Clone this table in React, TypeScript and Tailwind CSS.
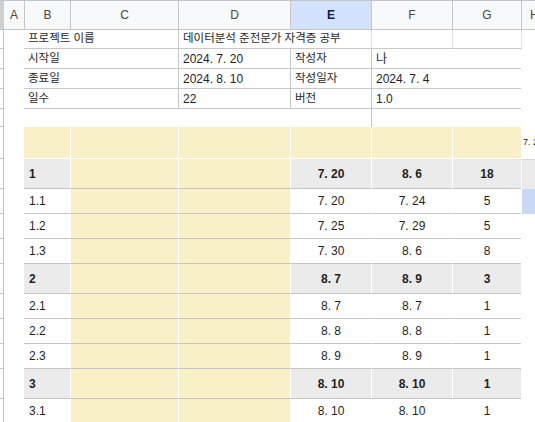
import React from 'react'

type Task = { id: string; start: string; end: string; days: string; group?: boolean }

const tasks: Task[] = [
  { id: '1', start: '7. 20', end: '8. 6', days: '18', group: true },
  { id: '1.1', start: '7. 20', end: '7. 24', days: '5' },
  { id: '1.2', start: '7. 25', end: '7. 29', days: '5' },
  { id: '1.3', start: '7. 30', end: '8. 6', days: '8' },
  { id: '2', start: '8. 7', end: '8. 9', days: '3', group: true },
  { id: '2.1', start: '8. 7', end: '8. 7', days: '1' },
  { id: '2.2', start: '8. 8', end: '8. 8', days: '1' },
  { id: '2.3', start: '8. 9', end: '8. 9', days: '1' },
  { id: '3', start: '8. 10', end: '8. 10', days: '1', group: true },
  { id: '3.1', start: '8. 10', end: '8. 10', days: '1' },
]

const info = [
  { label: '시작일', value: '2024. 7. 20', label2: '작성자', value2: '나' },
  { label: '종료일', value: '2024. 8. 10', label2: '작성일자', value2: '2024. 7. 4' },
  { label: '일수', value: '22', label2: '버전', value2: '1.0' },
]

function Gutter() {
  return <div className="w-[4px] shrink-0 border-r border-b border-[#c4c4c4]" />
}

function HeaderCell({ label, width, active }: { label: string; width: string; active?: boolean }) {
  return (
    <div
      className={`flex ${width} shrink-0 items-center justify-center border-l border-[#c4c7c5] ${
        active ? 'bg-[#d3e3fd] font-bold text-[#041e49]' : ''
      }`}
    >
      {label}
    </div>
  )
}

function TaskRow({ task, index }: { task: Task; index: number }) {
  const cell = task.group ? 'bg-[#ebebeb] font-bold' : 'bg-white'
  // column H: grey band next to the first group, selected cell under it
  const extra = index === 0 ? 'bg-[#ebebeb] border-t border-[#d6d6d6]' : index === 1 ? 'bg-[#c9d9f3]' : ''
  return (
    <div className={`flex ${task.group ? 'h-[30px]' : 'h-[25px]'}`}>
      <Gutter />
      <div className="w-[20px] shrink-0" />
      <div className={`flex w-[46px] shrink-0 items-center border-b border-[#c4c4c4] pl-[5px] ${cell}`}>
        {task.id}
      </div>
      <div className="w-[108px] shrink-0 border-b border-l border-b-[#c4c4c4] border-l-white bg-[#f9f0c8]" />
      <div className="w-[112px] shrink-0 border-b border-l border-b-[#c4c4c4] border-l-white bg-[#f9f0c8]" />
      <div className={`flex w-[81px] shrink-0 items-center justify-center border-b border-l border-b-[#c4c4c4] border-l-white ${cell}`}>
        {task.start}
      </div>
      <div className={`flex w-[81px] shrink-0 items-center justify-center border-b border-l border-b-[#c4c4c4] border-l-white ${cell}`}>
        {task.end}
      </div>
      <div className={`flex w-[69px] shrink-0 items-center justify-center border-b border-l border-b-[#c4c4c4] border-l-white ${cell}`}>
        {task.days}
      </div>
      <div className={`flex-1 border-l border-l-white ${extra}`} />
    </div>
  )
}

export default function App() {
  return (
    <div className="h-[422px] w-[535px] overflow-hidden bg-white font-[family-name:Liberation_Sans,Noto_Sans_CJK_KR,sans-serif] text-[12px] text-[#1f1f1f]">
      {/* column headers */}
      <div className="flex h-[30px] border-y border-[#c4c7c5] bg-[#f8f9fa] text-[#444746]">
        <div className="w-[4px] shrink-0 bg-[#cfcfcf]" />
        <div className="flex w-[20px] shrink-0 items-center justify-center">A</div>
        <HeaderCell label="B" width="w-[46px]" />
        <HeaderCell label="C" width="w-[108px]" />
        <HeaderCell label="D" width="w-[112px]" />
        <HeaderCell label="E" width="w-[81px]" active />
        <HeaderCell label="F" width="w-[81px]" />
        <HeaderCell label="G" width="w-[69px]" />
        <div className="flex flex-1 items-center border-l border-[#c4c7c5] pl-[8px]">H</div>
      </div>

      {/* project info */}
      <div className="flex h-[19px]">
        <Gutter />
        <div className="w-[20px] shrink-0" />
        <div className="flex w-[154px] shrink-0 items-center border-b border-[#c8c8c8] pl-[4px] text-[11.5px]">
          프로젝트 이름
        </div>
        <div className="flex w-[193px] shrink-0 items-center whitespace-nowrap border-b border-l border-[#c8c8c8] pl-[4px] text-[11.5px]">
          데이터분석 준전문가 자격증 공부
        </div>
        <div className="w-[81px] shrink-0 border-b border-l border-b-[#c8c8c8] border-l-[#e0e0e0]" />
        <div className="w-[69px] shrink-0 border-b border-l border-b-[#c8c8c8] border-l-[#e0e0e0]" />
        <div className="flex-1 border-l border-[#e0e0e0]" />
      </div>
      {info.map((r) => (
        <div key={r.label} className="flex h-[20px]">
          <Gutter />
          <div className="w-[20px] shrink-0" />
          <div className="flex w-[154px] shrink-0 items-center border-b border-[#c8c8c8] pl-[4px] text-[11.5px]">
            {r.label}
          </div>
          <div className="flex w-[112px] shrink-0 items-center border-b border-l border-[#c8c8c8] pl-[4px]">
            {r.value}
          </div>
          <div className="flex w-[81px] shrink-0 items-center border-b border-l border-[#c8c8c8] pl-[4px] text-[11.5px]">
            {r.label2}
          </div>
          <div className="flex w-[150px] shrink-0 items-center border-b border-l border-[#c8c8c8] pl-[4px]">
            {r.value2}
          </div>
          <div className="flex-1" />
        </div>
      ))}
      <div className="flex h-[18px]">
        <Gutter />
        <div className="w-[367px] shrink-0" />
        <div className="w-[81px] shrink-0 border-l border-[#c8c8c8]" />
        <div className="flex-1" />
      </div>

      {/* schedule header band */}
      <div className="flex h-[32px]">
        <Gutter />
        <div className="w-[20px] shrink-0" />
        <div className="w-[46px] shrink-0 border-b border-b-white bg-[#f9f0c8]" />
        <div className="w-[108px] shrink-0 border-b border-l border-white bg-[#f9f0c8]" />
        <div className="w-[112px] shrink-0 border-b border-l border-white bg-[#f9f0c8]" />
        <div className="w-[81px] shrink-0 border-b border-l border-white bg-[#f9f0c8]" />
        <div className="w-[81px] shrink-0 border-b border-l border-white bg-[#f9f0c8]" />
        <div className="w-[69px] shrink-0 border-b border-l border-white bg-[#f9f0c8]" />
        <div className="flex flex-1 items-center overflow-hidden whitespace-nowrap pl-[2px] text-[9px]">7. 20</div>
      </div>

      {tasks.map((t, i) => (
        <TaskRow key={t.id} task={t} index={i} />
      ))}

      <div className="flex h-[9px]">
        <div className="w-[4px] shrink-0 border-r border-[#c4c4c4]" />
      </div>
    </div>
  )
}
